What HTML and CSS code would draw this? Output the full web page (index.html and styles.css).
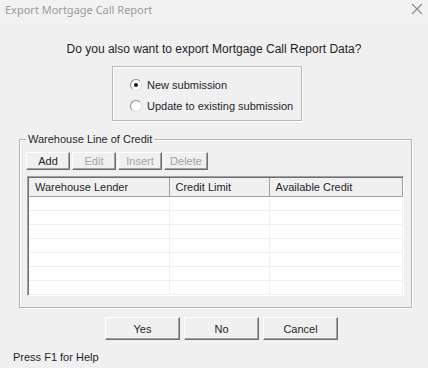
FILE: index.html
```html
<!DOCTYPE html>
<html>
<head>
    <title>Export Mortgage Call Report</title>
    <link rel="stylesheet" href="styles.css">
</head>
<body>
    <div class="titlebar">
        <span class="title">Export Mortgage Call Report</span>
        <svg class="close" width="12" height="12" viewBox="0 0 12 12">
            <path d="M1 1 L11 11 M11 1 L1 11" stroke="#8c8c8c" stroke-width="1.1" fill="none"/>
        </svg>
    </div>

    <p class="question">Do you also want to export Mortgage Call Report Data?</p>

    <div class="choice-box">
        <label class="choice"><span class="radio checked"></span>New submission</label>
        <label class="choice"><span class="radio"></span>Update to existing submission</label>
    </div>

    <fieldset class="group">
        <legend>Warehouse Line of Credit</legend>
        <div class="toolbar">
            <button class="tool">Add</button>
            <button class="tool" disabled>Edit</button>
            <button class="tool" disabled>Insert</button>
            <button class="tool" disabled>Delete</button>
        </div>
        <div class="grid">
            <table>
                <thead>
                    <tr>
                        <th class="col-lender">Warehouse Lender</th>
                        <th class="col-limit">Credit Limit</th>
                        <th>Available Credit</th>
                    </tr>
                </thead>
                <tbody>
                    <tr><td></td><td></td><td></td></tr>
                    <tr><td></td><td></td><td></td></tr>
                    <tr><td></td><td></td><td></td></tr>
                    <tr><td></td><td></td><td></td></tr>
                    <tr><td></td><td></td><td></td></tr>
                    <tr><td></td><td></td><td></td></tr>
                    <tr><td></td><td></td><td></td></tr>
                </tbody>
            </table>
        </div>
    </fieldset>

    <div class="actions">
        <button class="btn">Yes</button>
        <button class="btn">No</button>
        <button class="btn">Cancel</button>
    </div>

    <p class="help">Press F1 for Help</p>
</body>
</html>
```

FILE: styles.css
```css
body { margin: 0; width: 428px; height: 368px; overflow: hidden; background: #f0f0f0; font: 11px "Liberation Sans", Arial, sans-serif; color: #1f1f2a; }

.titlebar { height: 24px; display: flex; justify-content: space-between; align-items: center; padding: 0 5px 0 5px; background: #f2f2f2; }
.title { font: 11px "Noto Sans", sans-serif; color: #9a9a9a; margin-top: -5px; }
.close { margin-top: -6px; }

.question { margin: 18px 0 0; font-size: 12px; line-height: 14px; text-align: center; }

.choice-box { margin: 10px 0 0 112px; width: 190px; height: 55px; border: 1px solid #b9b9b9; box-shadow: inset 1px 1px 0 #fff, 1px 1px 0 #fff; padding-top: 7px; box-sizing: border-box; }
.choice { display: flex; align-items: center; height: 21px; padding-left: 17px; }
.radio { width: 10px; height: 10px; border-radius: 50%; background: #fff; border: 1px solid; border-color: #8a8a8a #e0e0e0 #e0e0e0 #8a8a8a; margin-right: 5px; position: relative; }
.radio.checked::after { content: ""; position: absolute; left: 3px; top: 3px; width: 4px; height: 4px; border-radius: 50%; background: #1a1a1a; }

.group { margin: 11px 16px 0 19px; padding: 6px 7px 11px 6px; border: 1px solid #b4b4b4; box-shadow: inset 1px 1px 0 #fff, 1px 1px 0 #fff; min-width: 0; }
.group legend { padding: 0 2px; margin-left: 0; line-height: 14px; }

.toolbar { display: flex; gap: 2px; }
.tool, .btn { font: inherit; color: #1f1f2a; background: #f0f0f0; border: 1px solid; border-color: #fff #6f6f6f #6f6f6f #fff; box-shadow: inset -1px -1px 0 #a0a0a0; padding: 0; }
.tool { width: 44px; height: 18px; }
.tool:disabled { color: #a3a3a3; }

.grid { margin: 6px 0 0 1px; height: 120px; background: #fff; border: 1px solid; border-color: #a0a0a0 #fff #fff #a0a0a0; box-shadow: inset 1px 1px 0 #6f6f6f; padding: 1px 0 0 1px; box-sizing: border-box; }
.grid table { width: 100%; border-collapse: collapse; table-layout: fixed; }
.grid th { height: 18px; padding: 0 0 0 6px; text-align: left; font-weight: normal; background: #f0f0f0; border-right: 1px solid #a0a0a0; border-bottom: 1px solid #a0a0a0; box-sizing: border-box; }
.col-lender { width: 140px; }
.col-limit { width: 100px; }
.grid td { height: 14px; padding: 0; border-right: 1px solid #f0f0f0; border-bottom: 1px solid #f0f0f0; box-sizing: border-box; }

.actions { display: flex; gap: 4px; margin: 9px 0 0 105px; }
.btn { width: 75px; height: 23px; }

.help { margin: 10px 0 0 13px; line-height: 14px; }
```
